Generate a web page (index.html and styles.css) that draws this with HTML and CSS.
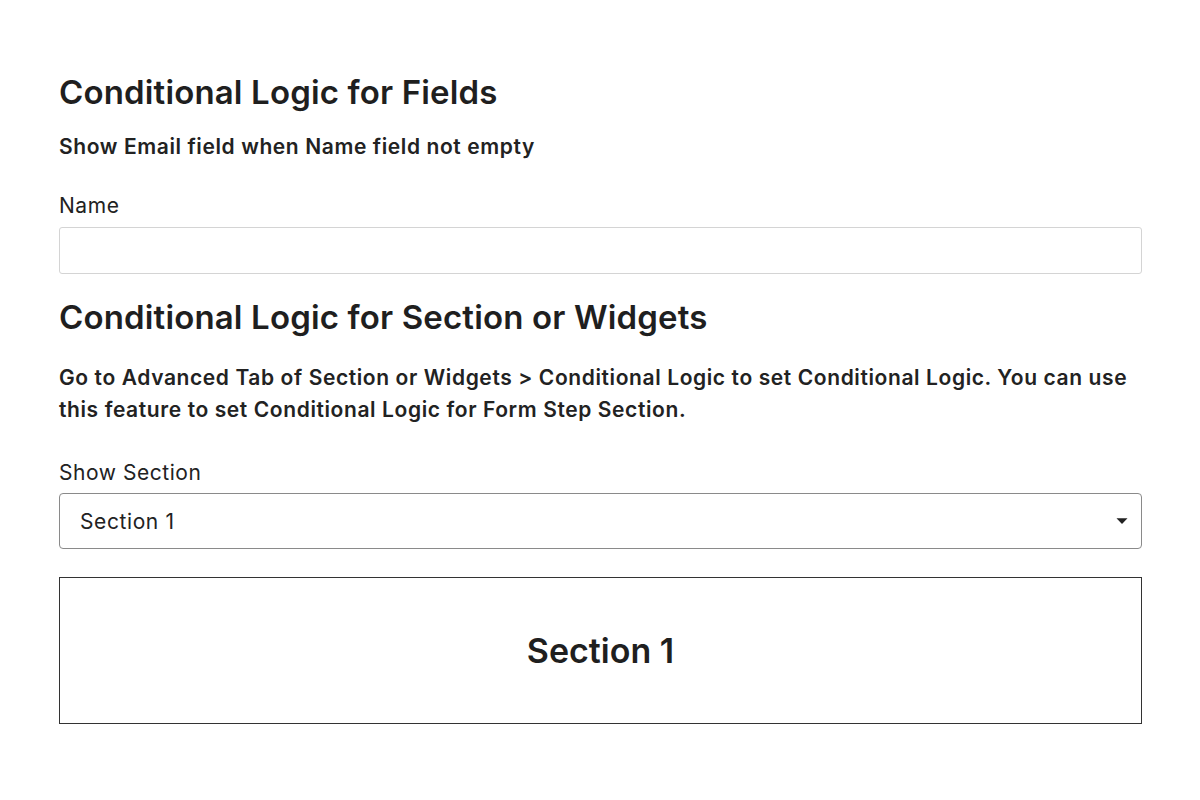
FILE: index.html
```html
<!DOCTYPE html>
<html lang="en">
<head>
<meta charset="utf-8">
<title>Conditional Logic</title>
<link rel="stylesheet" href="styles.css">
</head>
<body>
<main class="page">
  <h2 class="title">Conditional Logic for Fields</h2>
  <p class="desc">Show Email field when Name field not empty</p>
  <div class="field">
    <label class="label" for="name">Name</label>
    <input class="input" id="name" type="text">
  </div>

  <h2 class="title title-2">Conditional Logic for Section or Widgets</h2>
  <p class="desc desc-2">Go to Advanced Tab of Section or Widgets &gt; Conditional Logic to set Conditional Logic. You can use this feature to set Conditional Logic for Form Step Section.</p>
  <div class="field field-2">
    <label class="label" for="sect">Show Section</label>
    <div class="select" id="sect">
      <span class="select-value">Section 1</span>
      <svg class="caret" width="12" height="8" viewBox="0 0 12 8"><path d="M0.5 1.2 L11.5 1.2 L6 7 Z" fill="#222"/></svg>
    </div>
  </div>

  <section class="section-box">
    <h3 class="section-title">Section 1</h3>
  </section>
</main>
</body>
</html>
```
FILE: styles.css
```css
html, body {
  margin: 0;
  padding: 0;
  background: #fff;
}
body {
  font-family: Inter, "Noto Sans", sans-serif;
  color: #222;
}
.page {
  margin: 0 58px 0 59px;
  padding-top: 73px;
  display: flex;
  flex-direction: column;
}
.title {
  margin: 0;
  font-size: 33px;
  line-height: 38px;
  font-weight: 600;
  letter-spacing: 0.15px;
  color: #1f1f1f;
}
.title-2 {
  margin-top: 24px;
}
.desc {
  margin: 20px 0 0;
  font-size: 21px;
  line-height: 32px;
  font-weight: 600;
  letter-spacing: 0.6px;
  color: #222;
}
.desc-2 {
  margin-top: 26px;
  letter-spacing: 0.6px;
}
.field {
  margin-top: 28px;
  display: flex;
  flex-direction: column;
}
.field-2 {
  margin-top: 32px;
}
.label {
  font-size: 21px;
  line-height: 30px;
  letter-spacing: 0.55px;
  color: #222;
}
.input {
  margin-top: 6px;
  height: 47px;
  box-sizing: border-box;
  border: 1px solid #d4d4d4;
  border-radius: 3px;
  background: #fff;
  padding: 0 20px;
  font: inherit;
}
.select {
  margin-top: 5px;
  height: 56px;
  box-sizing: border-box;
  border: 1.5px solid #8a8a8a;
  border-radius: 4px;
  display: flex;
  align-items: center;
  justify-content: space-between;
  padding: 0 13px 0 20px;
}
.select-value {
  font-size: 21px;
  letter-spacing: 0.6px;
  color: #222;
}
.caret {
  display: block;
}
.section-box {
  margin-top: 28px;
  height: 147px;
  box-sizing: border-box;
  border: 1.5px solid #333;
  display: flex;
  align-items: center;
  justify-content: center;
}
.section-title {
  margin: 0;
  font-size: 34px;
  font-weight: 600;
  color: #1f1f1f;
}
```
